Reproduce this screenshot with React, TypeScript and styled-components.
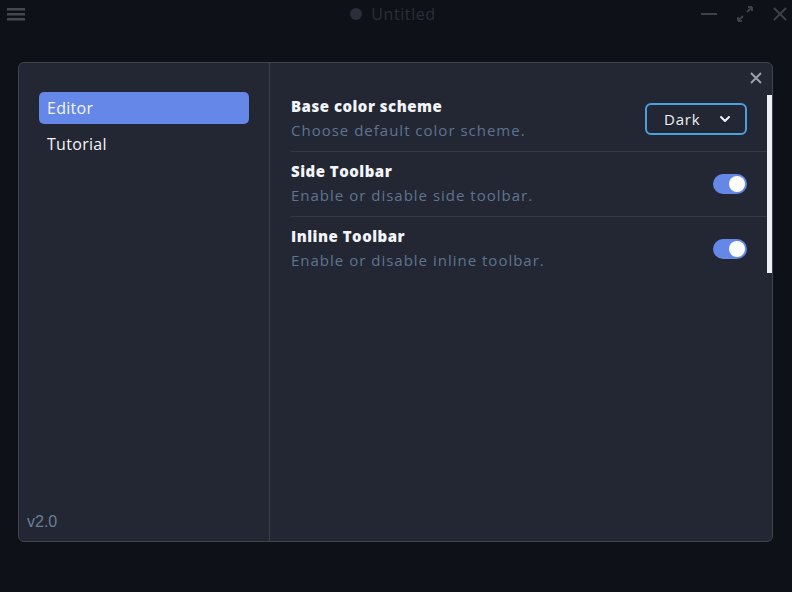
import React, { useState } from 'react'
import styled, { createGlobalStyle } from 'styled-components'

const GlobalStyle = createGlobalStyle`
	html, body {
		margin: 0;
		padding: 0;
		background: #0e1118;
		font-family: "Open Sans", "Noto Sans", sans-serif;
	}
	#root {
		height: 592px;
	}
`

const Screen = styled.div`
	width: 792px;
	height: 592px;
	display: flex;
	flex-direction: column;
	background: #0e1118;
	overflow: hidden;
`
const TitleBar = styled.div`
	height: 28px;
	display: flex;
	align-items: center;
	justify-content: space-between;
	padding: 0 4px 0 6px;
`
const Title = styled.div`
	display: flex;
	align-items: center;
	gap: 9px;
	font-size: 16px;
	letter-spacing: 0.6px;
	color: #2a2f3a;
	margin-left: 60px;
`
const Dot = styled.span`
	width: 12px;
	height: 12px;
	border-radius: 50%;
	background: #2a2f3a;
`
const WinButtons = styled.div`
	display: flex;
	align-items: center;
	gap: 18px;
`
const Body = styled.div`
	flex: 1;
	padding: 34px 19px 50px 18px;
	display: flex;
`
const Modal = styled.div`
	flex: 1;
	display: flex;
	background: #232733;
	border: 1px solid #3e434e;
	border-radius: 6px;
	position: relative;
`
const Sidebar = styled.div`
	width: 251px;
	border-right: 1px solid #3a3f4a;
	display: flex;
	flex-direction: column;
	padding: 29px 20px 10px 20px;
	box-sizing: border-box;
`
const NavItem = styled.div<{ $active?: boolean }>`
	height: 32px;
	display: flex;
	align-items: center;
	padding: 0 8px;
	border-radius: 5px;
	font-size: 16px;
	letter-spacing: 0.3px;
	color: #f3f5fa;
	background: ${({ $active }) => ($active ? '#6587e8' : 'transparent')};
	margin-bottom: 4px;
	line-height: 30px;
`
const Version = styled.div`
	margin-top: auto;
	margin-left: -12px;
	font-size: 16px;
	color: #6b7f98;
	font-family: "Liberation Sans", sans-serif;
`
const Main = styled.div`
	flex: 1;
	padding: 32px 0 0 21px;
	display: flex;
	position: relative;
`
const List = styled.div`
	flex: 1;
	display: flex;
	flex-direction: column;
`
const Scrollbar = styled.div`
	width: 5px;
	height: 178px;
	background: #eef0f3;
`
const Row = styled.div<{ $first?: boolean; $last?: boolean }>`
	display: flex;
	align-items: flex-start;
	justify-content: space-between;
	padding: ${({ $first }) => ($first ? '1px' : '9px')} 20px 0 0;
	height: ${({ $first }) => ($first ? '57px' : '65px')};
	box-sizing: border-box;
	border-bottom: ${({ $last }) => ($last ? 'none' : '1px solid #343946')};
`
const RowText = styled.div`
	display: flex;
	flex-direction: column;
	gap: 3px;
`
const RowTitle = styled.div`
	font-size: 15px;
	line-height: 20px;
	font-weight: 800;
	color: #f2f4f8;
	letter-spacing: 0.5px;
`
const RowDesc = styled.div`
	font-size: 15px;
	line-height: 22px;
	color: #5f7490;
	letter-spacing: 1px;
`
const Select = styled.div`
	width: 102px;
	height: 32px;
	box-sizing: border-box;
	border: 2px solid #4c9fe0;
	border-radius: 6px;
	display: flex;
	align-items: center;
	justify-content: space-between;
	padding: 0 14px 0 17px;
	font-size: 15px;
	letter-spacing: 0.8px;
	color: #eef1f6;
	margin-top: 7px;
`
const Toggle = styled.button<{ $on: boolean }>`
	width: 34px;
	height: 20px;
	border: none;
	padding: 2px;
	border-radius: 10px;
	background: ${({ $on }) => ($on ? '#6587e8' : '#4a4f5c')};
	display: flex;
	justify-content: ${({ $on }) => ($on ? 'flex-end' : 'flex-start')};
	cursor: pointer;
	margin-top: 13px;
`
const Knob = styled.span`
	width: 16px;
	height: 16px;
	border-radius: 50%;
	background: #ffffff;
`
const CloseButton = styled.div`
	position: absolute;
	top: 9px;
	right: 10px;
	display: flex;
`

const Switch = ({ initial }: { initial: boolean }) => {
	const [on, setOn] = useState(initial)
	return (
		<Toggle $on={on} onClick={() => setOn(!on)}>
			<Knob />
		</Toggle>
	)
}

const App = () => {
	const settings = [
		{ title: 'Side Toolbar', desc: 'Enable or disable side toolbar.' },
		{ title: 'Inline Toolbar', desc: 'Enable or disable inline toolbar.' },
	]
	return (
		<Screen>
			<GlobalStyle />
			<TitleBar>
				<svg width="20" height="14" viewBox="0 0 20 14">
					<rect x="1" y="1" width="18" height="2.5" fill="#45484f" />
					<rect x="1" y="6" width="18" height="2.5" fill="#45484f" />
					<rect x="1" y="11" width="18" height="2.5" fill="#45484f" />
				</svg>
				<Title>
					<Dot />
					Untitled
				</Title>
				<WinButtons>
					<svg width="18" height="18" viewBox="0 0 18 18">
						<path d="M1 9h16" stroke="#3d414a" strokeWidth="2" />
					</svg>
					<svg width="18" height="18" viewBox="0 0 18 18" fill="none" stroke="#3d414a" strokeWidth="2">
						<path d="M2 16l5-5M11 7l5-5M2 16v-4M2 16h4M16 2v4M16 2h-4" />
					</svg>
					<svg width="16" height="16" viewBox="0 0 16 16" fill="none" stroke="#3d414a" strokeWidth="2">
						<path d="M2 2l12 12M14 2L2 14" />
					</svg>
				</WinButtons>
			</TitleBar>
			<Body>
				<Modal>
					<Sidebar>
						<NavItem $active>Editor</NavItem>
						<NavItem>Tutorial</NavItem>
						<Version>v2.0</Version>
					</Sidebar>
					<Main>
						<List>
							<Row $first>
								<RowText>
									<RowTitle>Base color scheme</RowTitle>
									<RowDesc>Choose default color scheme.</RowDesc>
								</RowText>
								<Select>
									Dark
									<svg width="12" height="8" viewBox="0 0 12 8" fill="none" stroke="#eef1f6" strokeWidth="2" strokeLinecap="round" strokeLinejoin="round">
										<path d="M2 2l4 4 4-4" />
									</svg>
								</Select>
							</Row>
							{settings.map((s, i) => (
								<Row key={s.title} $last={i === settings.length - 1}>
									<RowText>
										<RowTitle>{s.title}</RowTitle>
										<RowDesc>{s.desc}</RowDesc>
									</RowText>
									<Switch initial />
								</Row>
							))}
						</List>
						<Scrollbar />
					</Main>
					<CloseButton>
						<svg width="12" height="12" viewBox="0 0 12 12" fill="none" stroke="#9aa0aa" strokeWidth="2">
							<path d="M1 1l10 10M11 1L1 11" />
						</svg>
					</CloseButton>
				</Modal>
			</Body>
		</Screen>
	)
}

export default App
